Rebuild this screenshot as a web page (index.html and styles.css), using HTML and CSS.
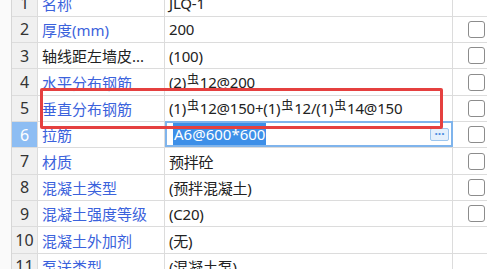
FILE: index.html
```html
<!DOCTYPE html>
<html lang="zh-CN">
<head>
    <meta charset="UTF-8">
    <title>属性列表</title>
    <link rel="stylesheet" href="styles.css">
</head>
<body>
    <div class="sheet">
        <div class="grid">
            <div class="row">
                <div class="num">1</div>
                <div class="name">名称</div>
                <div class="value">JLQ-1</div>
                <div class="check"></div>
            </div>
            <div class="row">
                <div class="num">2</div>
                <div class="name">厚度(mm)</div>
                <div class="value">200</div>
                <div class="check"><span class="box"></span></div>
            </div>
            <div class="row">
                <div class="num">3</div>
                <div class="name plain">轴线距左墙皮...</div>
                <div class="value">(100)</div>
                <div class="check"><span class="box"></span></div>
            </div>
            <div class="row">
                <div class="num">4</div>
                <div class="name">水平分布钢筋</div>
                <div class="value">(2)<span class="bar">虫</span>12@200</div>
                <div class="check"><span class="box"></span></div>
            </div>
            <div class="row">
                <div class="num">5</div>
                <div class="name">垂直分布钢筋</div>
                <div class="value">(1)<span class="bar">虫</span>12@150+(1)<span class="bar">虫</span>12/(1)<span class="bar">虫</span>14@150</div>
                <div class="check"><span class="box"></span></div>
            </div>
            <div class="row current">
                <div class="num">6</div>
                <div class="name">拉筋</div>
                <div class="value editing">
                    <span class="selected">A6@600*600</span>
                    <span class="more">···</span>
                </div>
                <div class="check"><span class="box"></span></div>
            </div>
            <div class="row">
                <div class="num">7</div>
                <div class="name">材质</div>
                <div class="value">预拌砼</div>
                <div class="check"><span class="box"></span></div>
            </div>
            <div class="row">
                <div class="num">8</div>
                <div class="name">混凝土类型</div>
                <div class="value">(预拌混凝土)</div>
                <div class="check"><span class="box"></span></div>
            </div>
            <div class="row">
                <div class="num">9</div>
                <div class="name">混凝土强度等级</div>
                <div class="value">(C20)</div>
                <div class="check"><span class="box"></span></div>
            </div>
            <div class="row">
                <div class="num">10</div>
                <div class="name">混凝土外加剂</div>
                <div class="value">(无)</div>
                <div class="check"></div>
            </div>
            <div class="row">
                <div class="num">11</div>
                <div class="name">泵送类型</div>
                <div class="value">(混凝土泵)</div>
                <div class="check"></div>
            </div>
        </div>
        <div class="mark"></div>
    </div>
</body>
</html>
```

FILE: styles.css
```css
* {
    margin: 0;
    padding: 0;
    box-sizing: border-box;
}

body {
    font-family: "Noto Sans", "Noto Sans CJK SC", sans-serif;
    font-size: 15px;
    color: #222;
    background: #fafafa;
}

.sheet {
    position: relative;
    height: 269px;
    overflow: hidden;
    padding-left: 11px;
}

.grid {
    margin-top: -9.6px;
    border-left: 1px solid #d6d6d6;
    background: #fff;
}

.row {
    display: grid;
    grid-template-columns: 26px 127px 288px 1fr;
    height: 26.33px;
    border-bottom: 1px solid #dcdcdc;
}

.row > div {
    display: flex;
    align-items: center;
    white-space: nowrap;
    overflow: hidden;
}

.num {
    justify-content: center;
    background: #f0f0f0;
    color: #333;
    border-right: 1px solid #dcdcdc;
    font-size: 16px;
}

.current .num {
    background: #8dbdf3;
    color: #fff;
}

.name {
    padding-left: 4px;
    color: #3b62dc;
    border-right: 1px solid #dcdcdc;
}

.name.plain {
    color: #222;
}

.value {
    padding-left: 4px;
    border-right: 1px solid #dcdcdc;
    letter-spacing: -0.2px;
}

.bar {
    font-size: 12px;
    position: relative;
    top: -3px;
    margin: 0 1px;
}

.value.editing {
    position: relative;
    border: 2px solid #7fb4ec;
    margin: -1px 0 0 0;
    padding-left: 6px;
    letter-spacing: 0;
}

.selected {
    background: #3d8fe8;
    color: #fff;
    padding: 1px 1px;
    line-height: 20px;
}

.more {
    position: absolute;
    right: 2px;
    top: 5px;
    width: 19px;
    height: 13px;
    border: 1px solid #9cc6ef;
    border-radius: 2px;
    background: #e4f0fc;
    color: #4a8be0;
    font-size: 12px;
    line-height: 9px;
    text-align: center;
    font-weight: bold;
}

.check {
    padding-left: 15px;
}

.box {
    display: block;
    width: 17px;
    height: 17px;
    border: 1.5px solid #8c8c8c;
    border-radius: 3px;
    flex-shrink: 0;
}

.mark {
    position: absolute;
    left: 40px;
    top: 88px;
    width: 403px;
    height: 41px;
    border: 3px solid #e5403f;
    border-radius: 2px;
}
```
